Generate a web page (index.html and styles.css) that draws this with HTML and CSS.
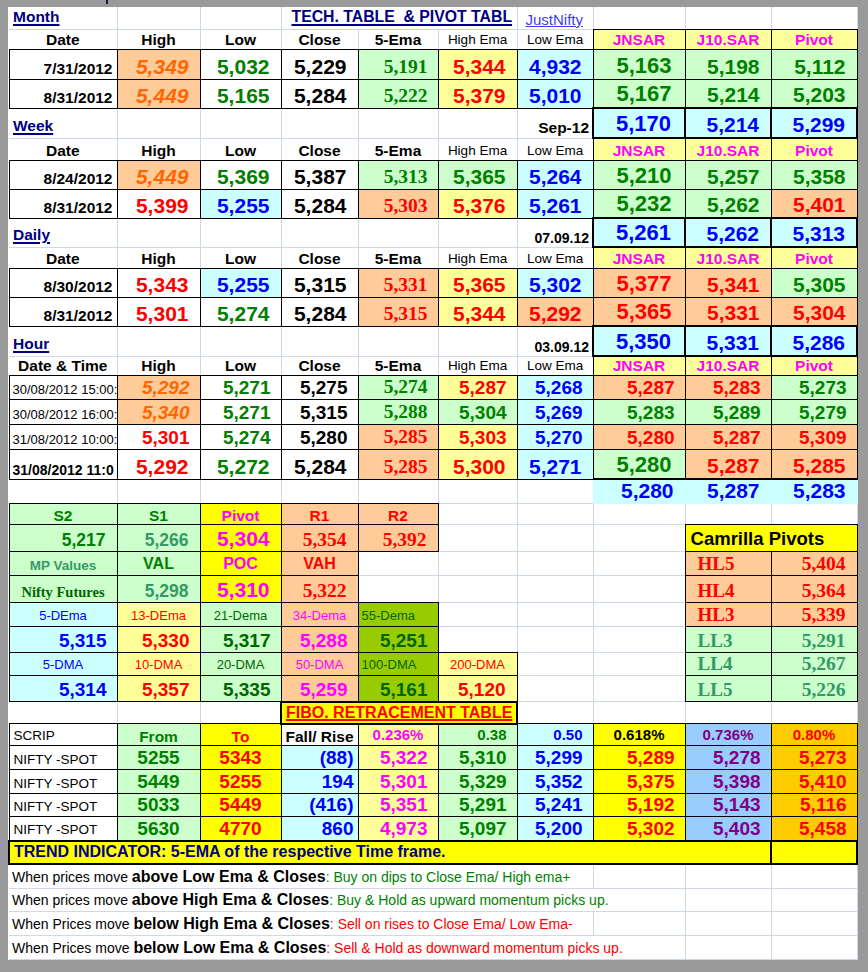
FILE: index.html
```html
<!DOCTYPE html>
<html>
<head>
<meta charset="utf-8">
<title>Tech Table &amp; Pivot Table</title>
<link rel="stylesheet" href="styles.css">
</head>
<body>
<span class="tick"></span>
<table class="sheet">
<colgroup>
<col class="ca"><col class="cb"><col class="cc"><col class="cd"><col class="ce"><col class="cf"><col class="cg"><col class="ch"><col class="ci"><col class="cj">
</colgroup>
<tbody>
<tr class="h22">
<td class="lab">Month</td><td></td><td></td>
<td colspan="3" class="title">TECH. TABLE&nbsp; &amp; PIVOT TABL</td>
<td class="link">JustNifty</td><td></td><td></td><td></td>
</tr>
<tr class="h20">
<td class="hd">Date</td><td class="hd">High</td><td class="hd">Low</td><td class="hd">Close</td><td class="hd">5-Ema</td><td class="hs">High Ema</td><td class="hs">Low Ema</td>
<td class="hd ly mg bx">JNSAR</td><td class="hd ly mg bx">J10.SAR</td><td class="hd ly mg bx">Pivot</td>
</tr>
<tr class="h30">
<td class="dt bx">7/31/2012</td><td class="v pe or it bx">5,349</td><td class="v gr bx">5,032</td><td class="v bx">5,229</td><td class="sr lg gr bx">5,191</td><td class="v ly rd bx">5,344</td><td class="v cy bl bx">4,932</td>
<td class="vb lg gr bx">5,163</td><td class="v lg gr bx">5,198</td><td class="v lg gr bx">5,112</td>
</tr>
<tr class="h29">
<td class="dt bx">8/31/2012</td><td class="v pe or it bx">5,449</td><td class="v gr bx">5,165</td><td class="v bx">5,284</td><td class="sr lg gr bx">5,222</td><td class="v ly rd bx">5,379</td><td class="v cy bl bx">5,010</td>
<td class="vb lg gr bx">5,167</td><td class="v lg gr bx">5,214</td><td class="v lg gr bx">5,203</td>
</tr>
<tr class="h30">
<td class="lab">Week</td><td></td><td></td><td></td><td></td><td></td><td class="per">Sep-12</td>
<td class="vb cy bl tk">5,170</td><td class="v cy bl tk">5,214</td><td class="v cy bl tk">5,299</td>
</tr>
<tr class="h22">
<td class="hd">Date</td><td class="hd">High</td><td class="hd">Low</td><td class="hd">Close</td><td class="hd">5-Ema</td><td class="hs">High Ema</td><td class="hs">Low Ema</td>
<td class="hd ly mg bx">JNSAR</td><td class="hd ly mg bx">J10.SAR</td><td class="hd ly mg bx">Pivot</td>
</tr>
<tr class="h29">
<td class="dt bx">8/24/2012</td><td class="v pe or it bx">5,449</td><td class="v gr bx">5,369</td><td class="v bx">5,387</td><td class="sr lg gr bx">5,313</td><td class="v lg gr bx">5,365</td><td class="v cy bl bx">5,264</td>
<td class="vb lg gr bx">5,210</td><td class="v lg gr bx">5,257</td><td class="v lg gr bx">5,358</td>
</tr>
<tr class="h29">
<td class="dt bx">8/31/2012</td><td class="v rd bx">5,399</td><td class="v cy bl bx">5,255</td><td class="v bx">5,284</td><td class="sr pe rd bx">5,303</td><td class="v ly rd bx">5,376</td><td class="v cy bl bx">5,261</td>
<td class="vb lg gr bx">5,232</td><td class="v lg gr bx">5,262</td><td class="v pe rd bx">5,401</td>
</tr>
<tr class="h29">
<td class="lab">Daily</td><td></td><td></td><td></td><td></td><td></td><td class="per sm14">07.09.12</td>
<td class="vb cy bl tk">5,261</td><td class="v cy bl tk">5,262</td><td class="v cy bl tk">5,313</td>
</tr>
<tr class="h21">
<td class="hd">Date</td><td class="hd">High</td><td class="hd">Low</td><td class="hd">Close</td><td class="hd">5-Ema</td><td class="hs">High Ema</td><td class="hs">Low Ema</td>
<td class="hd ly mg bx">JNSAR</td><td class="hd ly mg bx">J10.SAR</td><td class="hd ly mg bx">Pivot</td>
</tr>
<tr class="h29">
<td class="dt bx">8/30/2012</td><td class="v rd bx">5,343</td><td class="v cy bl bx">5,255</td><td class="v bx">5,315</td><td class="sr pe rd bx">5,331</td><td class="v ly rd bx">5,365</td><td class="v cy bl bx">5,302</td>
<td class="vb pe rd bx">5,377</td><td class="v pe rd bx">5,341</td><td class="v lg gr bx">5,305</td>
</tr>
<tr class="h29">
<td class="dt bx">8/31/2012</td><td class="v rd bx">5,301</td><td class="v gr bx">5,274</td><td class="v bx">5,284</td><td class="sr pe rd bx">5,315</td><td class="v ly rd bx">5,344</td><td class="v pe rd bx">5,292</td>
<td class="vb pe rd bx">5,365</td><td class="v pe rd bx">5,331</td><td class="v pe rd bx">5,304</td>
</tr>
<tr class="h30">
<td class="lab">Hour</td><td></td><td></td><td></td><td></td><td></td><td class="per sm14">03.09.12</td>
<td class="vb cy bl tk">5,350</td><td class="v cy bl tk">5,331</td><td class="v cy bl tk">5,286</td>
</tr>
<tr class="h19">
<td class="hd">Date &amp; Time</td><td class="hd">High</td><td class="hd">Low</td><td class="hd">Close</td><td class="hd">5-Ema</td><td class="hs">High Ema</td><td class="hs">Low Ema</td>
<td class="hd ly mg bx">JNSAR</td><td class="hd ly mg bx">J10.SAR</td><td class="hd ly mg bx">Pivot</td>
</tr>
<tr class="h24">
<td class="ts bx">30/08/2012 15:00:</td><td class="vs pe or it bx">5,292</td><td class="vs gr bx">5,271</td><td class="vs bx">5,275</td><td class="sr lg gr bx">5,274</td><td class="vs ly rd bx">5,287</td><td class="vs cy bl bx">5,268</td>
<td class="vs pe rd bx">5,287</td><td class="vs pe rd bx">5,283</td><td class="vs lg gr bx">5,273</td>
</tr>
<tr class="h25">
<td class="ts bx">30/08/2012 16:00:</td><td class="vs pe or it bx">5,340</td><td class="vs gr bx">5,271</td><td class="vs bx">5,315</td><td class="sr lg gr bx">5,288</td><td class="vs lg gr bx">5,304</td><td class="vs cy bl bx">5,269</td>
<td class="vs lg gr bx">5,283</td><td class="vs lg gr bx">5,289</td><td class="vs lg gr bx">5,279</td>
</tr>
<tr class="h25">
<td class="ts bx">31/08/2012 10:00:</td><td class="vs rd bx">5,301</td><td class="vs gr bx">5,274</td><td class="vs bx">5,280</td><td class="sr pe rd bx">5,285</td><td class="vs ly rd bx">5,303</td><td class="vs cy bl bx">5,270</td>
<td class="vs pe rd bx">5,280</td><td class="vs pe rd bx">5,287</td><td class="vs pe rd bx">5,309</td>
</tr>
<tr class="h30">
<td class="tsb bx">31/08/2012 11:0</td><td class="v rd bx">5,292</td><td class="v gr bx">5,272</td><td class="v bx">5,284</td><td class="sr pe rd bx">5,285</td><td class="v ly rd bx">5,300</td><td class="v cy bl bx">5,271</td>
<td class="vb lg gr bx tb">5,280</td><td class="v pe rd bx tb">5,287</td><td class="v pe rd bx tb">5,285</td>
</tr>
<tr class="h23">
<td></td><td></td><td></td><td></td><td></td><td></td><td></td>
<td class="v cn bl">5,280</td><td class="v cn bl">5,287</td><td class="v cn bl">5,283</td>
</tr>
<tr class="h21">
<td class="hd lg gr bx">S2</td><td class="hd lg gr bx">S1</td><td class="hd ye mg bx">Pivot</td><td class="hd pe rd bx">R1</td><td class="hd pe rd bx">R2</td>
<td></td><td></td><td></td><td></td><td></td>
</tr>
<tr class="h27">
<td class="m lg gr bx">5,217</td><td class="m lg tl bx">5,266</td><td class="v ye mg bx">5,304</td><td class="sr pe rd bx pr11">5,354</td><td class="sr pe rd bx pr11">5,392</td>
<td></td><td></td><td></td>
<td colspan="2" class="cam ye bx">Camrilla Pivots</td>
</tr>
<tr class="h24">
<td class="mp lg tl bx">MP Values</td><td class="ml lg gr bx">VAL</td><td class="ml ye mg bx">POC</td><td class="ml pe rd bx">VAH</td><td></td>
<td></td><td></td><td></td>
<td class="ck pe rd bx">HL5</td><td class="sr pe rd bx pr11">5,404</td>
</tr>
<tr class="h27">
<td class="nf lg dg bx">Nifty Futures</td><td class="m lg tl bx">5,298</td><td class="v ye mg bx">5,310</td><td class="sr pe rd bx pr11">5,322</td><td></td>
<td></td><td></td><td></td>
<td class="ck pe rd bx">HL4</td><td class="sr pe rd bx pr11">5,364</td>
</tr>
<tr class="h24">
<td class="sm cy bl bx">5-DEma</td><td class="sm ly rd bx">13-DEma</td><td class="sm lg dg bx">21-Dema</td><td class="sm pe mg bx">34-Dema</td><td class="sm sml ol dg bx">55-Dema</td>
<td></td><td></td><td></td>
<td class="ck pe rd bx">HL3</td><td class="sr pe rd bx pr11">5,339</td>
</tr>
<tr class="h26">
<td class="vs cy bl bx">5,315</td><td class="vs ly rd bx">5,330</td><td class="vs lg dg bx">5,317</td><td class="vs pe mg bx">5,288</td><td class="vs ol dg bx">5,251</td>
<td></td><td></td><td></td>
<td class="ck lg tl bx">LL3</td><td class="sr lg tl bx pr11">5,291</td>
</tr>
<tr class="h23">
<td class="sm cy bl bx">5-DMA</td><td class="sm ly rd bx">10-DMA</td><td class="sm lg dg bx">20-DMA</td><td class="sm pe mg bx">50-DMA</td><td class="sm sml ol dg bx">100-DMA</td><td class="sm ly rd bx">200-DMA</td>
<td></td><td></td>
<td class="ck lg tl bx">LL4</td><td class="sr lg tl bx pr11">5,267</td>
</tr>
<tr class="h26">
<td class="vs cy bl bx">5,314</td><td class="vs ly rd bx">5,357</td><td class="vs lg dg bx">5,335</td><td class="vs pe mg bx">5,259</td><td class="vs ol dg bx">5,161</td><td class="vs ly rd bx pr11">5,120</td>
<td></td><td></td>
<td class="ck lg tl bx">LL5</td><td class="sr lg tl bx pr11">5,226</td>
</tr>
<tr class="h22">
<td></td><td></td><td></td>
<td colspan="3" class="fibo ye tk">FIBO. RETRACEMENT TABLE</td>
<td></td><td></td><td></td><td></td>
</tr>
<tr class="h22">
<td class="scr bx">SCRIP</td><td class="hd lg gr bx">From</td><td class="hd ye rd bx">To</td><td class="hd bx">Fall/ Rise</td><td class="pc ly mg bx">0.236%</td><td class="pcr lg gr bx">0.38</td><td class="pcr lg bl2 cy bx">0.50</td><td class="pc ye bx">0.618%</td><td class="pc lb pu bx">0.736%</td><td class="pc go rd bx">0.80%</td>
</tr>
<tr class="h24">
<td class="scr bx">NIFTY -SPOT</td><td class="fv c lg gr bx">5255</td><td class="fv c ye rd bx">5343</td><td class="fv fr cy bl bx">(88)</td><td class="fv ly mg bx">5,322</td><td class="fv lg gr bx">5,310</td><td class="fv cy bl bx">5,299</td><td class="fv ye rd bx">5,289</td><td class="fv lb pu bx">5,278</td><td class="fv go rd bx">5,273</td>
</tr>
<tr class="h24">
<td class="scr bx">NIFTY -SPOT</td><td class="fv c lg gr bx">5449</td><td class="fv c ye rd bx">5255</td><td class="fv fr cy bl bx">194</td><td class="fv ly mg bx">5,301</td><td class="fv lg gr bx">5,329</td><td class="fv cy bl bx">5,352</td><td class="fv ye rd bx">5,375</td><td class="fv lb pu bx">5,398</td><td class="fv go rd bx">5,410</td>
</tr>
<tr class="h23">
<td class="scr bx">NIFTY -SPOT</td><td class="fv c lg gr bx">5033</td><td class="fv c ye rd bx">5449</td><td class="fv fr cy bl bx">(416)</td><td class="fv ly mg bx">5,351</td><td class="fv lg gr bx">5,291</td><td class="fv cy bl bx">5,241</td><td class="fv ye rd bx">5,192</td><td class="fv lb pu bx">5,143</td><td class="fv go rd bx">5,116</td>
</tr>
<tr class="h24">
<td class="scr bx">NIFTY -SPOT</td><td class="fv c lg gr bx">5630</td><td class="fv c ye rd bx">4770</td><td class="fv fr cy bl bx">860</td><td class="fv ly mg bx">4,973</td><td class="fv lg gr bx">5,097</td><td class="fv cy bl bx">5,200</td><td class="fv ye rd bx">5,302</td><td class="fv lb pu bx">5,403</td><td class="fv go rd bx">5,458</td>
</tr>
<tr class="h23">
<td colspan="9" class="trend ye tk">TREND INDICATOR: 5-EMA of the respective Time frame.</td>
<td class="ye tk"></td>
</tr>
<tr class="h25">
<td colspan="7" class="note">When prices move <b>above Low Ema &amp; Closes</b><span class="ng">: Buy on dips to Close Ema/ High ema+</span></td>
<td></td><td></td><td></td>
</tr>
<tr class="h23">
<td colspan="8" class="note">When prices move <b>above High Ema &amp; Closes</b><span class="ng">: Buy &amp; Hold as upward momentum picks up.</span></td>
<td></td><td></td>
</tr>
<tr class="h24">
<td colspan="7" class="note">When Prices move <b>below High Ema &amp; Closes</b><span class="nr">: Sell on rises to Close Ema/ Low Ema-</span></td>
<td></td><td></td><td></td>
</tr>
<tr class="h24">
<td colspan="8" class="note">When Prices move <b>below Low Ema &amp; Closes</b><span class="nr">: Sell &amp; Hold as downward momentum picks up.</span></td>
<td></td><td></td>
</tr>
</tbody>
</table>
</body>
</html>
```
FILE: styles.css
```css
html, body {
  margin: 0;
  padding: 0;
}
body {
  background: #9a9a9a;
  width: 868px;
  height: 972px;
  position: relative;
  overflow: hidden;
}
.tick {
  position: absolute;
  left: 106px;
  top: 0;
  width: 2px;
  height: 4px;
  background: #1c1c40;
}
.sheet {
  margin: 7px 0 0 8px;
  width: 848px;
  border-collapse: collapse;
  table-layout: fixed;
  background: #fff;
  font-family: "Liberation Sans", Arial, sans-serif;
  color: #000;
}
.sheet col { border-right: 1px solid #d0d7e5; }
.sheet tr { border-bottom: 1px solid #d0d7e5; }
.ca { width: 108px; }
.cb { width: 83px; }
.cc { width: 81px; }
.cd { width: 77px; }
.ce { width: 80px; }
.cf { width: 79px; }
.cg { width: 76px; }
.ch { width: 92px; }
.ci { width: 86px; }
.cj { width: 86px; }

.h19 { height: 19px; }
.h20 { height: 20px; }
.h21 { height: 21px; }
.h22 { height: 22px; }
.h23 { height: 23px; }
.h24 { height: 24px; }
.h25 { height: 25px; }
.h26 { height: 26px; }
.h27 { height: 27px; }
.h29 { height: 29px; }
.h30 { height: 30px; }

.sheet td {
  padding: 0 4px 2px 4px;
  line-height: 1;
  vertical-align: bottom;
  white-space: nowrap;
  overflow: hidden;
  text-align: right;
  font-size: 15.5px;
  font-weight: bold;
}

/* fills */
.pe { background: #ffcc99; }
.lg { background: #ccffcc; }
.cy { background: #ccffff; }
.ly { background: #ffff99; }
.ye { background: #ffff00; }
.lb { background: #99ccff; }
.go { background: #ffcc00; }
.ol { background: #99cc00; }
.sheet td.cn { background: #ccffff; border: 1px solid #ccffff; }

/* borders */
.sheet td.bx { border: 1px solid #000; }
.sheet td.tk { border: 2px solid #000; }
.sheet td.tb { border-bottom: 2px solid #000; }

/* text colours */
.or { color: #ff6600; }
.gr { color: #008000; }
.rd { color: #ff0000; }
.bl { color: #0000ff; }
.mg { color: #ff00ff; }
.tl { color: #339966; }
.pu { color: #800080; }
.dg { color: #006600; }
.it { font-style: italic; }

/* labels */
.sheet td.lab {
  text-align: left;
  color: #000080;
  text-decoration: underline;
  text-decoration-thickness: 2px;
  text-underline-offset: 2px;
  padding-bottom: 4px;
}
.sheet td.title {
  text-align: left;
  padding-left: 10px;
  padding-right: 2px;
  font-size: 15.8px;
  color: #000080;
  text-decoration: underline;
  text-decoration-thickness: 2px;
  text-underline-offset: 2px;
  padding-bottom: 4px;
}
.sheet td.link {
  text-align: left;
  padding-left: 8px;
  font-weight: normal;
  font-size: 15px;
  color: #3c3cf0;
  text-decoration: underline;
}
.sheet td.hd { text-align: center; padding-bottom: 1px; }
.sheet td.hs { text-align: center; font-weight: normal; font-size: 13.5px; padding-bottom: 2px; }
.sheet td.per { padding-right: 3px; }
.sheet td.sm14 { font-size: 14px; }

/* values */
.sheet td.dt { padding-right: 4px; }
.sheet td.v { font-size: 21px; padding-right: 11px; }
.sheet td.vb { font-size: 22px; padding-right: 13px; }
.sheet td.vs { font-size: 19px; padding-right: 10px; }
.sheet td.sr {
  font-family: "Liberation Serif", "Times New Roman", serif;
  font-size: 19.5px;
  padding-right: 10px;
}
.sheet td.pr11 { padding-right: 11px; }
.sheet td.ts { text-align: left; padding-left: 3px; padding-right: 0; font-weight: normal; font-size: 13px; padding-bottom: 3px; }
.sheet td.tsb { text-align: left; padding-left: 3px; padding-right: 0; font-size: 14px; }

/* pivot block */
.sheet td.m { font-size: 17.5px; padding-right: 11px; }
.sheet td.mp { text-align: center; font-size: 13.5px; padding-bottom: 3px; }
.sheet td.ml { text-align: center; font-size: 16px; padding-bottom: 3px; }
.sheet td.nf {
  text-align: center;
  font-family: "Liberation Serif", "Times New Roman", serif;
  font-size: 14.5px;
  padding-bottom: 3px;
}
.sheet td.sm { text-align: center; font-weight: normal; font-size: 13px; padding-bottom: 4px; }
.sheet td.sml { text-align: left; padding-left: 3px; }
.sheet td.cam { text-align: left; padding-left: 5px; font-size: 18.5px; padding-bottom: 3px; }
.sheet td.ck {
  text-align: left;
  padding-left: 12px;
  font-family: "Liberation Serif", "Times New Roman", serif;
  font-size: 19px;
}

/* fibo block */
.sheet td.fibo {
  text-align: left;
  padding-left: 4px;
  font-size: 16px;
  color: #ff0000;
  text-decoration: underline;
  text-decoration-thickness: 2px;
  text-underline-offset: 1px;
}
.sheet td.scr { text-align: left; padding-left: 4px; font-weight: normal; font-size: 13.5px; padding-bottom: 3px; }
.sheet td.pc { text-align: center; font-size: 15px; padding-bottom: 3px; }
.sheet td.pcr { font-size: 15px; padding-right: 10px; padding-bottom: 3px; }
.sheet td.bl2 { color: #0000ff; }
.sheet td.fv { font-size: 19px; padding-right: 10px; }
.sheet td.c { text-align: center; padding-right: 4px; }
.sheet td.fr { padding-right: 4px; }

/* trend + notes */
.sheet td.trend {
  text-align: left;
  padding-left: 4px;
  font-size: 16px;
  color: #000080;
  padding-bottom: 3px;
}
.sheet td.note {
  text-align: left;
  padding-left: 3px;
  font-weight: normal;
  font-size: 14px;
  padding-bottom: 3px;
}
.note b { font-size: 16px; font-weight: bold; }
.ng { color: #008000; }
.nr { color: #ff0000; }
```
